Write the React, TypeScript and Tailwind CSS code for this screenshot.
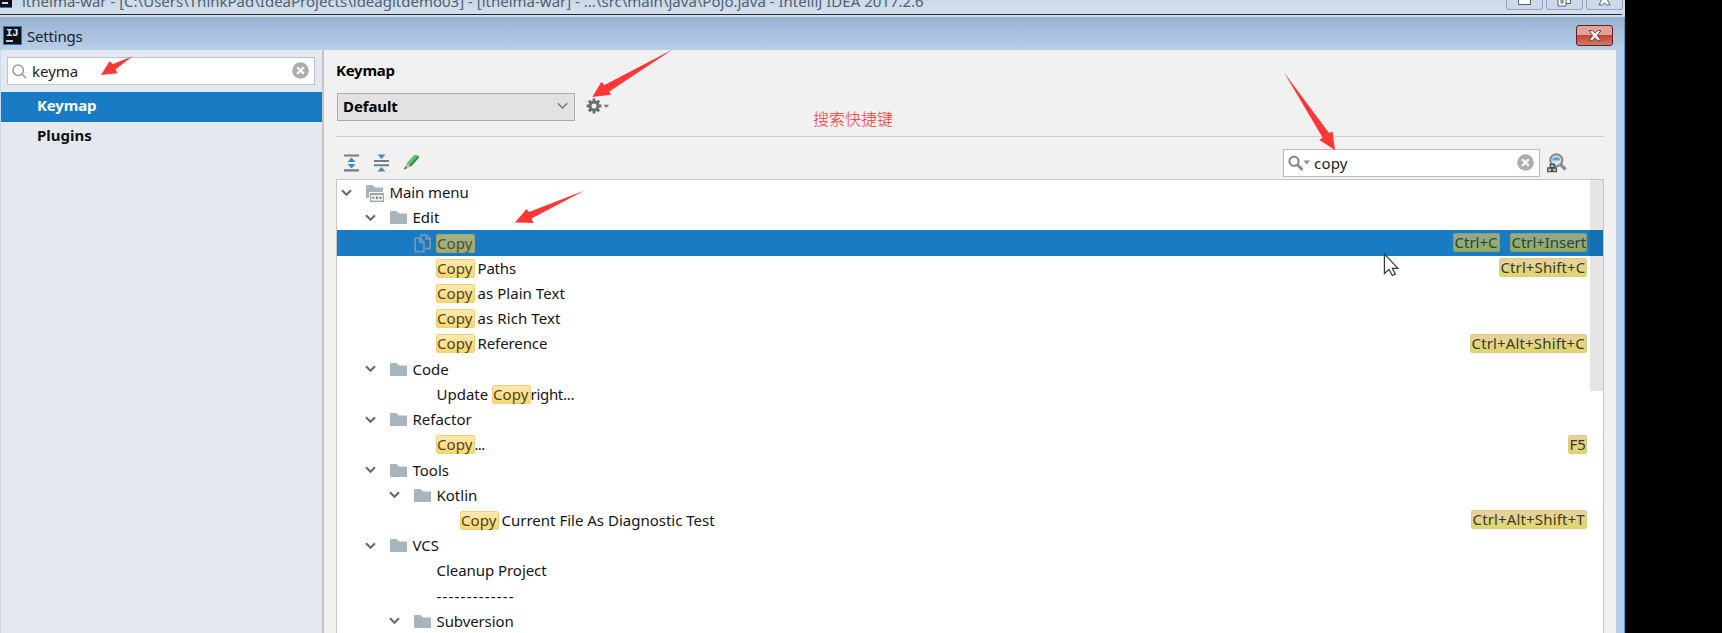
import React from "react";

type Row = {
  level: number;
  kind: "root" | "folder" | "copy" | "leaf";
  parts: { t: string; hl?: boolean; cls?: string }[];
  keys?: { t: string; w: string }[];
  selected?: boolean;
};

const rows: Row[] = [
  { level: 0, kind: "root", parts: [{ t: "Main menu", cls: "pl-px tracking-[-0.1px]" }] },
  { level: 1, kind: "folder", parts: [{ t: "Edit" }] },
  { level: 2, kind: "copy", selected: true, parts: [{ t: "Copy", hl: true }], keys: [{ t: "Ctrl+C", w: "w-[47px]" }, { t: "Ctrl+Insert", w: "w-[77px] tracking-[-0.05px]" }] },
  { level: 2, kind: "leaf", parts: [{ t: "Copy", hl: true }, { t: "Paths", cls: "pl-[3px] tracking-[-0.2px]" }], keys: [{ t: "Ctrl+Shift+C", w: "w-[88px] tracking-[0.1px]" }] },
  { level: 2, kind: "leaf", parts: [{ t: "Copy", hl: true }, { t: "as Plain Text", cls: "pl-[3px] tracking-[0.05px]" }] },
  { level: 2, kind: "leaf", parts: [{ t: "Copy", hl: true }, { t: "as Rich Text", cls: "pl-[3px] tracking-[0.1px]" }] },
  { level: 2, kind: "leaf", parts: [{ t: "Copy", hl: true }, { t: "Reference", cls: "pl-[3px] tracking-[-0.1px]" }], keys: [{ t: "Ctrl+Alt+Shift+C", w: "w-[117px] tracking-[0.15px]" }] },
  { level: 1, kind: "folder", parts: [{ t: "Code" }] },
  { level: 2, kind: "leaf", parts: [{ t: "Update ", cls: "w-[55px]" }, { t: "Copy", hl: true }, { t: "right...", cls: "tracking-[-0.3px]" }] },
  { level: 1, kind: "folder", parts: [{ t: "Refactor" }] },
  { level: 2, kind: "leaf", parts: [{ t: "Copy", hl: true }, { t: "...", cls: "tracking-[-0.7px]" }], keys: [{ t: "F5", w: "w-[19px]" }] },
  { level: 1, kind: "folder", parts: [{ t: "Tools" }] },
  { level: 2, kind: "folder", parts: [{ t: "Kotlin" }] },
  { level: 3, kind: "leaf", parts: [{ t: "Copy", hl: true }, { t: "Current File As Diagnostic Test", cls: "pl-[3px]" }], keys: [{ t: "Ctrl+Alt+Shift+T", w: "w-[116px] tracking-[0.15px]" }] },
  { level: 1, kind: "folder", parts: [{ t: "VCS" }] },
  { level: 2, kind: "leaf", parts: [{ t: "Cleanup Project", cls: "tracking-[-0.05px]" }] },
  { level: 2, kind: "leaf", parts: [{ t: "-------------", cls: "tracking-[1.2px]" }] },
  { level: 2, kind: "folder", parts: [{ t: "Subversion", cls: "tracking-[-0.1px]" }] },
];

const levelPad = ["pl-[3.5px]", "pl-[27.5px]", "pl-[51.5px]", "pl-[75.5px]"];

const Chevron = () => (
  <svg width="11" height="8" viewBox="0 0 11 8" fill="none">
    <path d="M1 1.3 L5.5 5.8 L10 1.3" stroke="#6b6b6b" strokeWidth="2.1" />
  </svg>
);

const Folder = () => (
  <svg width="17" height="13" viewBox="0 0 17 13">
    <path d="M0 0 H6.5 L9 2.4 H17 V13 H0 Z" fill="#a9b5be" />
  </svg>
);

const RootFolder = () => (
  <svg className="mt-[2px]" width="18" height="17" viewBox="0 0 18 17">
    <path d="M0 0 H6.5 L9 2.4 H17 V7 H3 V13 H0 Z" fill="#a9b5be" />
    <rect x="4" y="8" width="14" height="9" fill="#9ba7b0" />
    <rect x="5.2" y="10" width="11.6" height="5.6" fill="#fff" />
    <rect x="6.2" y="11.5" width="2.2" height="2.6" fill="#c29a5c" />
    <rect x="9.8" y="11.5" width="2.2" height="2.6" fill="#3f95c6" />
    <rect x="13.4" y="11.5" width="2.2" height="2.6" fill="#c9675f" />
  </svg>
);

const CopyIcon = () => (
  <svg width="18" height="19" viewBox="0 0 18 19" fill="none" stroke="#7d98ae" strokeWidth="1.6">
    <path d="M1.2 4.2 H6 L10 8 V17.6 H1.2 Z M5.8 4.4 V8.4 H10" />
    <path d="M7 3.5 V1 H12.5 L16.2 4.5 V14.6 H11.5 M12 1.2 V5 H16" />
  </svg>
);

const Clear = () => (
  <svg width="17" height="17" viewBox="0 0 17 17">
    <circle cx="8.5" cy="8.5" r="8.3" fill="#adadad" />
    <path d="M5.2 5.2 L11.8 11.8 M11.8 5.2 L5.2 11.8" stroke="#fff" strokeWidth="2.2" />
  </svg>
);

const TreeRow = ({ row }: { row: Row }) => (
  <div
    className={`flex h-[25.23px] shrink-0 items-center text-[15px] leading-[19px] ${levelPad[row.level]} ${
      row.selected ? "bg-[#187bc4]" : ""
    }`}
  >
    <div className="flex w-[25px] shrink-0 items-center">
      {(row.kind === "root" || row.kind === "folder") && <Chevron />}
    </div>
    <div className="flex w-[23px] shrink-0 items-center">
      {row.kind === "root" && <RootFolder />}
      {row.kind === "folder" && <Folder />}
      {row.kind === "copy" && <CopyIcon />}
    </div>
    {row.parts.map((p, i) =>
      p.hl ? (
        <span
          key={i}
          className={`box-border h-[19px] w-[39px] shrink-0 whitespace-pre rounded-[2px] border pl-[0.5px] leading-[17px] tracking-[0.1px] ${
            i === 0 ? "-ml-[1px]" : ""
          } ${
            row.selected
              ? "border-[#a5a75f] bg-linear-to-b from-[#a5b086] to-[#a3ab64] text-[#3c5448]"
              : "border-[#efcf7c] bg-linear-to-b from-[#ffe9ae] to-[#fad76e] text-[#4f4526]"
          }`}
        >
          {p.t}
        </span>
      ) : (
        <span key={i} className={`shrink-0 whitespace-pre text-[#151515] ${p.cls ?? ""}`}>
          {p.t}
        </span>
      )
    )}
    <div className="ml-auto flex gap-[10px] pr-[16px] pb-px">
      {row.keys?.map((k) => (
        <span
          key={k.t}
          className={`box-border h-[19px] whitespace-nowrap rounded-[2px] border pl-[0.5px] leading-[16px] ${k.w} ${
            row.selected
              ? "border-[#88a06c] bg-linear-to-b from-[#97a88e] to-[#8fac5e] text-[#2b4438]"
              : "border-[#d8cd83] bg-linear-to-b from-[#e8d0a4] to-[#dcd86c] text-[#3d3a20]"
          }`}
        >
          {k.t}
        </span>
      ))}
    </div>
  </div>
);

const AppIcon = () => (
  <div className="mt-[3px] flex h-[19px] w-[19px] shrink-0 flex-col items-start border border-[#2c6fcf] bg-[#0d1018] pl-[2px] pt-[1px]">
    <span className="font-['Liberation_Mono',monospace] text-[11px] font-bold leading-[11px] tracking-[-0.5px] text-[#e6e6e6]">IJ</span>
    <span className="mt-[1px] h-[2px] w-[7px] bg-[#c8c8c8]" />
  </div>
);

export default function App() {
  return (
    <div className="relative flex h-[633px] w-[1722px] overflow-hidden bg-black font-['Noto_Sans','Noto_Sans_CJK_SC',sans-serif] text-[15px]">
      <div className="flex h-full w-[1625px] flex-col bg-[#d0deec]">
        <div className="flex h-[14px] shrink-0 items-end overflow-hidden bg-linear-to-b from-[#cbd9e9] to-[#d4e0ed]">
          <div className="flex h-[14px] w-[22px] shrink-0 items-start">
            <div className="ml-[-1px] flex h-[8px] w-[13px] items-start border-b border-[#2c6fcf] bg-[#0d1018] pl-[3px] pt-[2px]">
              <span className="h-[2px] w-[6px] bg-[#d8d8d8]" />
            </div>
          </div>
          <span className="mb-[3px] whitespace-pre text-[15px] leading-[20px] text-[#51606f]">
            {"itheima-war - [C:\\Users\\ThinkPad\\IdeaProjects\\ideagitdemo03] - [itheima-war] - ...\\src\\main\\java\\Pojo.java - IntelliJ IDEA 2017.2.6"}
          </span>
          <div className="ml-auto flex h-[14px] items-start gap-[3px] pr-[2px]">
            <div className="flex h-[10px] w-[37px] justify-center rounded-b-[3px] border border-t-0 border-[#93a5bb] bg-[#cbd9ea]">
              <span className="h-[5px] w-[13px] rounded-b-[1px] border border-t-0 border-[#5a6270] bg-white" />
            </div>
            <div className="flex h-[10px] w-[37px] justify-center rounded-b-[3px] border border-t-0 border-[#93a5bb] bg-[#cbd9ea]">
              <svg width="15" height="7" viewBox="0 0 15 7" fill="#fff" stroke="#5a6270">
                <path d="M5 -1 H13.5 V3.5 H5 Z" />
                <path d="M1 -1 H9 V6 H1 Z" />
                <path d="M4 0 H6 V3 H4 Z" />
              </svg>
            </div>
            <div className="flex h-[10px] w-[37px] justify-center rounded-b-[3px] border border-t-0 border-[#93a5bb] bg-[#cbd9ea]">
              <svg width="13" height="6" viewBox="0 0 13 6" fill="#fff" stroke="#5a6270">
                <path d="M4 -1 L1 5 H4.5 L6.5 2.8 L8.5 5 H12 L9 -1" />
              </svg>
            </div>
          </div>
        </div>
        <div className="flex min-h-0 flex-1 flex-col rounded-tr-[5px] border-r border-t border-r-[#4aa3c4] border-t-[#24242c] bg-[#b7cfe9]">
          <div className="flex h-[35px] shrink-0 items-center border-t-2 border-[#d3dfec] bg-linear-to-b from-[#98b2d1] to-[#b7cfe9] pl-[3px]">
            <AppIcon />
            <span className="ml-[5px] mt-[5px] text-[15px] tracking-[-0.2px] text-[#1b232c]">Settings</span>
            <div className="ml-auto mr-[11px] mt-[4px] flex h-[21px] w-[37px] items-center justify-center rounded-[3px] border border-[#5e1f26] bg-linear-to-b from-[#e2a298] from-45% via-[#c0442f] via-50% to-[#d47a68]">
              <svg width="14" height="11" viewBox="0 0 14 11">
                <path d="M1 0.7 H4.7 L7 3.2 L9.3 0.7 H13 L9.2 5.5 L13 10.3 H9.3 L7 7.8 L4.7 10.3 H1 L4.8 5.5 Z" fill="#fff" stroke="#5f4a50" strokeWidth="1" />
              </svg>
            </div>
          </div>
          <div className="flex min-h-0 flex-1 pr-[8px]">
            <div className="flex w-[322px] shrink-0 flex-col border-l border-[#c9daec] bg-[#e4e9f0] pt-[7px]">
              <div className="ml-[6px] flex h-[28px] w-[308px] items-center border border-[#bfc3c9] bg-white pl-[4px] pr-[5px]">
                <svg width="15" height="15" viewBox="0 0 15 15" fill="none" stroke="#9b9b9b" strokeWidth="1.5">
                  <circle cx="6.2" cy="6.2" r="5.2" />
                  <path d="M10 10 L14 14.2" />
                </svg>
                <span className="ml-[5px] text-[15px] leading-[20px] text-[#222]">keyma</span>
                <span className="ml-auto pb-px"><Clear /></span>
              </div>
              <div className="mt-[7px] flex h-[30px] items-center bg-[#187bc4] pb-[3px] pl-[36px] font-bold tracking-[-0.15px] text-white">Keymap</div>
              <div className="flex h-[30px] items-center pb-[3px] pl-[36px] font-bold text-[#111]">Plugins</div>
            </div>
            <div className="w-[2px] shrink-0 bg-[#c2c6cb]" />
            <div className="flex min-w-0 flex-1 flex-col bg-[#f1f1f1] pl-[12px] pr-[12px]">
              <div className="mt-[9px] h-[22px] font-bold leading-[22px] tracking-[-0.25px] text-black">Keymap</div>
              <div className="mt-[12px] flex h-[28px] items-center">
                <div className="ml-px flex h-[28px] w-[238px] items-center border border-[#adadad] bg-[#e2e2e2] pb-[2px] pl-[5px] pr-[6px] font-bold tracking-[-0.1px]">
                  Default
                  <svg className="ml-auto" width="11" height="8" viewBox="0 0 11 8" fill="none">
                    <path d="M0.8 1.2 L5.5 6 L10.2 1.2" stroke="#777" strokeWidth="1.5" />
                  </svg>
                </div>
                <svg className="mb-[3px] ml-[11px]" width="24" height="16" viewBox="0 0 24 16">
                  <g transform="translate(8 8)" stroke="#6e6e6e">
                    <circle r="4" fill="none" strokeWidth="3" />
                    <path strokeWidth="2.8" d="M0 -7.4V-4 M0 7.4V4 M-7.4 0H-4 M7.4 0H4 M-5.2 -5.2L-3 -3 M5.2 5.2L3 3 M-5.2 5.2L-3 3 M5.2 -5.2L3 -3" />
                  </g>
                  <path d="M17.5 6.7 H23 L20.2 10 Z" fill="#777" />
                </svg>
              </div>
              <div className="mt-[15px] h-px shrink-0 bg-[#cfcfcf]" />
              <div className="flex h-[42px] shrink-0 items-center pl-[8px] pt-[10px]">
                <svg className="mb-px" width="15" height="18" viewBox="0 0 15 18">
                  <path d="M0 1.5 H15 M0 16.3 H15" stroke="#7b7b7b" strokeWidth="2.2" />
                  <path d="M7.5 3.6 L11.5 8 H3.5 Z M7.5 14.4 L11.5 10 H3.5 Z" fill="#3f8cc2" />
                </svg>
                <svg className="mb-px ml-[15px]" width="15" height="18" viewBox="0 0 15 18">
                  <path d="M0 7 H15 M0 11.2 H15" stroke="#7b7b7b" strokeWidth="2" />
                  <path d="M7.5 5 L11.5 0.6 H3.5 Z M7.5 13 L11.5 17.4 H3.5 Z" fill="#3f8cc2" />
                </svg>
                <svg className="mb-[2px] ml-[15px]" width="15" height="16" viewBox="0 0 15 16">
                  <path d="M2.6 9.2 L10 1.2 Q13.8 -0.6 15 3.6 L7 12.4 Z" fill="#5fc46e" />
                  <path d="M7 12.4 L15 3.6 L14.2 1.8 L5.2 11.2 Z" fill="#2f8f44" />
                  <path d="M2.6 9.2 L7 12.4 L0 15.5 Z" fill="#cdb592" />
                  <path d="M1.3 12.6 L2.8 14.2 L0 15.5 Z" fill="#444" />
                </svg>
                <div className="ml-auto flex h-[28px] w-[257px] items-center border border-[#b9bcc4] bg-white pl-[4px] pr-[5px]">
                  <svg className="mb-px" width="22" height="16" viewBox="0 0 22 16" fill="none">
                    <circle cx="6" cy="6.2" r="4.6" stroke="#8c8c8c" strokeWidth="2.2" />
                    <path d="M9.5 9.8 L14.5 15" stroke="#8c8c8c" strokeWidth="2.8" />
                    <path d="M15.5 5.5 H22 L18.7 9.5 Z" fill="#8c8c8c" />
                  </svg>
                  <span className="ml-[4px] text-[15px] tracking-[0.2px] text-[#222]">copy</span>
                  <span className="ml-auto pb-px"><Clear /></span>
                </div>
                <svg className="mb-px ml-[7px] mr-[37px]" width="20" height="20" viewBox="0 0 20 20" fill="none">
                  <circle cx="9.3" cy="7.3" r="6" fill="#d7e9f4" stroke="#8a8a8a" strokeWidth="2.2" />
                  <path d="M5.2 7.4 A4.2 4.2 0 0 1 13.4 7.4 Z" fill="#5ea5d6" />
                  <path d="M13.5 11.5 L18.5 16.5" stroke="#8a8a8a" strokeWidth="3.2" />
                  <path d="M3.3 11.3 H7.3 V14.5 H3.3 Z M0.8 15 H4.6 V18.6 H0.8 Z M5.6 15 H9.4 V18.6 H5.6 Z" fill="#ccc" stroke="#555" strokeWidth="1.4" />
                </svg>
              </div>
              <div className="relative flex min-h-0 flex-1 flex-col overflow-hidden border-x border-t border-[#c4c6c8] bg-white">
                {rows.map((r, i) => (
                  <TreeRow key={i} row={r} />
                ))}
                <div className="absolute right-0 top-0 h-[211px] w-[13px] bg-black/10" />
              </div>
            </div>
          </div>
        </div>
      </div>

      <span className="absolute left-[813px] top-[108px] whitespace-nowrap text-[16px] font-light leading-[22px] text-[#f33]">搜索快捷键</span>

      <svg className="pointer-events-none absolute left-0 top-0" width="1722" height="633" viewBox="0 0 1722 633">
        <g fill="#ff3836">
          <path d="M132.5 56.3 L113 64 L109.5 61.3 L101 75 L117.5 73.3 L115.5 69.5 Z" />
          <path d="M673 49.3 L604.5 85 L601.3 82 L592.3 97 L611 94.7 L609.3 91.5 Z" />
          <path d="M584.5 190.5 L529 212 L526.5 209 L515 222.5 L533.3 223 L531.5 218.5 Z" />
          <path d="M1284 72.5 L1329 133 L1332.5 131.5 L1335 150 L1319.3 140 L1322.5 137.5 Z" />
        </g>
        <path d="M1384.4 254 V273.5 L1389 269.5 L1392.3 275.5 L1395.3 274 L1392.3 268.3 H1398 Z" fill="#fff" stroke="#33383f" strokeWidth="1.2" />
      </svg>
    </div>
  );
}
